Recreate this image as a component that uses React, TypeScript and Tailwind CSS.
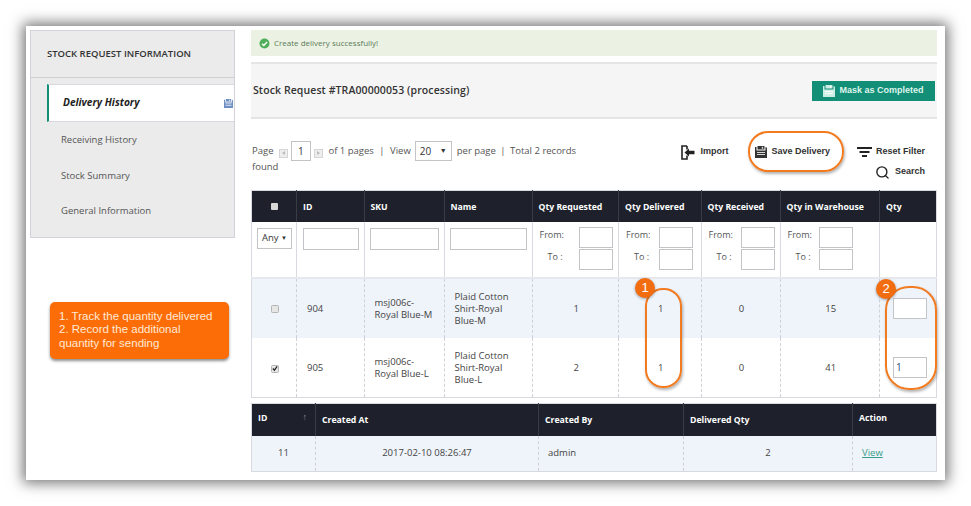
import React from 'react';
import { Search } from 'lucide-react';

const sans = 'font-["Open_Sans","Liberation_Sans",sans-serif]';
const arial = 'font-["Liberation_Sans",Arial,sans-serif]';

const rows = [
  { id: 904, sku: ['msj006c-', 'Royal Blue-M'], name: ['Plaid Cotton', 'Shirt-Royal', 'Blue-M'], requested: 1, delivered: 1, received: 0, warehouse: 15, qty: '', checked: false, bg: 'bg-[#eff3fa]' },
  { id: 905, sku: ['msj006c-', 'Royal Blue-L'], name: ['Plaid Cotton', 'Shirt-Royal', 'Blue-L'], requested: 2, delivered: 1, received: 0, warehouse: 41, qty: '1', checked: true, bg: 'bg-white' },
];

function FloppyIcon({ color, size = 12 }: { color: string; size?: number }) {
  return (
    <svg width={size} height={size} viewBox="0 0 12 12">
      <path d="M0 1h1.5v3.5h9V1H11l1 1v10H0z" fill={color} />
      <rect x="2.5" y="0" width="7" height="3.5" fill={color} />
      <rect x="6.8" y="0.8" width="1.4" height="2" fill="#fff" opacity="0.8" />
      <rect x="2" y="6" width="8" height="1" fill="#fff" opacity="0.8" />
      <rect x="2" y="8" width="8" height="1" fill="#fff" opacity="0.8" />
    </svg>
  );
}

function ImportIcon() {
  return (
    <svg width="14" height="15" viewBox="0 0 14 15" fill="none">
      <path d="M6 1H1v13h5V10.500M6 4.500V1" stroke="#222" strokeWidth="1.600" />
      <path d="M3.500 7.500L8 3.500v2.200h5.500v3.600H8v2.200z" fill="#222" />
    </svg>
  );
}

function FilterIcon() {
  return (
    <svg width="15" height="11" viewBox="0 0 15 11">
      <rect x="0" y="0" width="15" height="2" fill="#222" />
      <rect x="2.500" y="4" width="10" height="2" fill="#222" />
      <rect x="5" y="8" width="5" height="2" fill="#222" />
    </svg>
  );
}

function PagerArrow({ dir }: { dir: 'left' | 'right' }) {
  return (
    <span className="mx-[3px] inline-flex h-[9px] w-[9px] items-center justify-center border border-[#d5d5d5] bg-[#eeeeee] align-[-1px]">
      <span className={`h-0 w-0 border-y-[2px] border-y-transparent ${dir === 'left' ? 'border-r-[3px] border-r-[#bbbbbb]' : 'border-l-[3px] border-l-[#bbbbbb]'}`} />
    </span>
  );
}

function CheckBox({ checked }: { checked: boolean }) {
  return (
    <span className="inline-flex h-[8px] w-[8px] items-center justify-center rounded-[1.500px] border border-[#b5b5b5] bg-[#e6e6e6] align-middle">
      {checked && (
        <svg width="7" height="7" viewBox="0 0 7 7">
          <path d="M1 3.500l1.800 2L6 1" fill="none" stroke="#222" strokeWidth="1.400" />
        </svg>
      )}
    </span>
  );
}

function TextBox({ className = '', value = '' }: { className?: string; value?: string }) {
  return (
    <input
      readOnly
      value={value}
      className={`block border border-[#c4c4c8] bg-white px-[2px] text-[10px] text-[#1d4f7c] outline-none ${className}`}
    />
  );
}

function RangeFilter({ offset }: { offset: string }) {
  return (
    <div className={`flex flex-col gap-[1px] ${offset} text-[9px] text-[#555]`}>
      <div className="flex items-start justify-between">
        <span className="mt-[1px]">From:</span>
        <TextBox className="h-[21px] w-[34px]" />
      </div>
      <div className="flex items-start justify-between">
        <span className="ml-[8px] mt-[1px]">To :</span>
        <TextBox className="h-[21px] w-[34px]" />
      </div>
    </div>
  );
}

function Th({ children, className = '' }: { children?: React.ReactNode; className?: string }) {
  return (
    <th className={`border-r border-[#383c45] px-[6px] align-middle text-[8.700px] font-bold text-white last:border-r-0 ${className}`}>
      {children}
    </th>
  );
}

function Td({ children, className = '' }: { children?: React.ReactNode; className?: string }) {
  return (
    <td className={`border-r border-dashed border-r-[#cfd1d6] align-middle text-[9.500px] text-[#444] last:border-r-0 ${className}`}>
      {children}
    </td>
  );
}

function Oval({ className }: { className: string }) {
  return (
    <div className={`pointer-events-none absolute border-2 border-[#f27a1f] shadow-[1px_2px_3px_rgba(0,0,0,0.3)] ${className}`} />
  );
}

function Badge({ label, className }: { label: string; className: string }) {
  return (
    <div className={`absolute flex h-[20px] w-[20px] items-center justify-center rounded-full bg-[#f26d0f] text-[13px] text-white shadow-[0_1px_3px_rgba(0,0,0,0.35)] ${arial} ${className}`}>
      {label}
    </div>
  );
}

export default function App() {
  return (
    <div className={`h-[506px] w-[971px] overflow-hidden bg-white p-[26px] ${sans}`}>
      <div className="relative flex h-[454px] w-[919px] gap-[16px] bg-white p-[4px] shadow-[0_0_13px_3px_rgba(0,0,0,0.55)]">
        {/* sidebar */}
        <div className="w-[205px] shrink-0">
          <div className="border border-[#d2d3da] bg-[#ebebeb]">
            <div className="flex h-[47px] items-center border-b border-[#cfcfd4] pl-[16px] text-[9.500px] font-semibold text-[#333]">
              STOCK REQUEST INFORMATION
            </div>
            <div className="ml-[16px] pt-[6px] pb-[7.500px]">
              <div className="flex h-[38px] items-center justify-between border-y border-l-2 border-y-[#d8d8de] border-l-[#128f76] bg-white pr-[1px] pl-[14px] text-[10.200px] font-bold text-[#222] italic">
                <span>Delivery History</span>
                <FloppyIcon color="#6f8fc4" size={9} />
              </div>
              <div className="mt-[0.500px] flex h-[35.500px] items-center pl-[14px] text-[9.500px] text-[#555]">Receiving History</div>
              <div className="flex h-[35.500px] items-center pl-[14px] text-[9.500px] text-[#555]">Stock Summary</div>
              <div className="flex h-[35.500px] items-center pl-[14px] text-[9.500px] text-[#555]">General Information</div>
            </div>
          </div>
          <div className={`mt-[64px] ml-[20px] h-[57px] w-[179px] rounded-[5px] bg-[#fd6d07] px-[9px] py-[8px] text-[11.500px] leading-[13.500px] text-[#ffe9d6] shadow-[0_2px_3px_rgba(0,0,0,0.45)] ${arial}`}>
            <div>1. Track the quantity delivered</div>
            <div>2. Record the additional quantity for sending</div>
          </div>
        </div>

        {/* main */}
        <div className="w-[686px] shrink-0">
          <div className="flex h-[26px] items-center gap-[4px] bg-[#ebf2e4] pl-[8px] text-[8px] text-[#5b7a57]">
            <svg width="11" height="11" viewBox="0 0 11 11">
              <circle cx="5.500" cy="5.500" r="5" fill="#4fae5a" />
              <path d="M3 5.700l1.800 1.800L8 4" fill="none" stroke="#fff" strokeWidth="1.400" />
            </svg>
            Create delivery successfully!
          </div>

          <div className="mt-[6px] flex h-[57px] items-center justify-between border-y-2 border-[#e5e5e5] bg-[#f5f5f5] pr-[2px] pl-[2px]">
            <span className="mt-[1px] text-[10.500px] font-semibold tracking-[0.1px] text-[#333]">Stock Request #TRA00000053 (processing)</span>
            <div className={`flex h-[20px] w-[123px] items-center justify-center gap-[4px] bg-[#128f76] text-[9px] font-bold text-[#dff5ee] ${arial}`}>
              <FloppyIcon color="#cdeee4" />
              Mask as Completed
            </div>
          </div>

          <div className="flex h-[71px] items-start justify-between pt-[22px]">
            <div className="mt-[2px] w-[340px] pl-[1px] text-[9.500px] leading-[16px] text-[#555]">
              Page <PagerArrow dir="left" />
              <span className="-my-[2px] inline-block h-[20px] w-[20px] border border-[#c4c4c8] bg-white text-center align-middle text-[10px] leading-[18px] text-[#333]">1</span>
              <PagerArrow dir="right" /> of 1 pages <span className="mx-[3px]">|</span> View
              <span className="-my-[2px] mr-[5px] ml-[4px] inline-flex h-[20px] w-[37px] items-center justify-between border border-[#c4c4c8] bg-white px-[4px] align-middle text-[10px] text-[#333]">
                20<span className="text-[7px]">▼</span>
              </span>
              per page <span className="mx-[2px]">|</span> Total 2 records found
            </div>
            <div className={`mt-[1px] flex flex-col items-end pr-[12px] text-[9px] font-bold text-[#333] ${arial}`}>
              <div className="flex h-[20px] items-center gap-[27px]">
                <span className="flex items-center gap-[5px]"><ImportIcon />Import</span>
                <span className="flex items-center gap-[4px]"><FloppyIcon color="#333" />Save Delivery</span>
                <span className="flex items-center gap-[4px]"><FilterIcon />Reset Filter</span>
              </div>
              <span className="flex h-[20px] items-center gap-[5px]"><Search size={15} strokeWidth={2.200} color="#222" />Search</span>
            </div>
          </div>

          <table className="w-[686px] table-fixed border-collapse border border-[#d8dae0]">
            <colgroup>
              <col className="w-[45px]" /><col className="w-[67.500px]" /><col className="w-[80px]" /><col className="w-[88px]" />
              <col className="w-[86.500px]" /><col className="w-[82.500px]" /><col className="w-[79px]" /><col className="w-[99.500px]" /><col />
            </colgroup>
            <thead>
              <tr className="h-[31px] bg-[#1e212b]">
                <Th className="pt-[2px] text-center"><span className="inline-block h-[7px] w-[7px] rounded-[1px] bg-[#d8d8d8]" /></Th>
                <Th className="pt-[2px] text-left">ID</Th>
                <Th className="pt-[2px] text-left">SKU</Th>
                <Th className="pt-[2px] text-left">Name</Th>
                <Th className="pt-[2px] text-left">Qty Requested</Th>
                <Th className="pt-[2px] text-left">Qty Delivered</Th>
                <Th className="pt-[2px] text-left">Qty Received</Th>
                <Th className="pt-[2px] text-left">Qty in Warehouse</Th>
                <Th className="pt-[2px] text-left">Qty</Th>
              </tr>
            </thead>
            <tbody>
              <tr className="h-[56px] border-b-2 border-[#e6e8ee]">
                <td className="border-r border-[#d8dae0] px-[5px] pt-[6px] align-top">
                  <div className="flex h-[21px] w-[35px] items-center justify-between border border-[#c4c4c8] bg-white px-[4px] text-[9.500px] text-[#333]">
                    Any<span className="text-[6px]">▼</span>
                  </div>
                </td>
                <td className="border-r border-[#d8dae0] pl-[6px] pt-[6px] align-top"><TextBox className="h-[22px] w-[56px]" /></td>
                <td className="border-r border-[#d8dae0] pl-[5px] pt-[6px] align-top"><TextBox className="h-[22px] w-[69px]" /></td>
                <td className="border-r border-[#d8dae0] pl-[5px] pt-[6px] align-top"><TextBox className="h-[22px] w-[77px]" /></td>
                <td className="border-r border-[#d8dae0] pt-[5.500px] align-top"><RangeFilter offset="ml-[7px] mr-[5px]" /></td>
                <td className="border-r border-[#d8dae0] pt-[5.500px] align-top"><RangeFilter offset="ml-[7px] mr-[8px]" /></td>
                <td className="border-r border-[#d8dae0] pt-[5.500px] align-top"><RangeFilter offset="ml-[7px] mr-[5px]" /></td>
                <td className="border-r border-[#d8dae0] pt-[5.500px] align-top"><RangeFilter offset="ml-[7px] mr-[26px]" /></td>
                <td />
              </tr>
              {rows.map((row) => (
                <tr key={row.id} className={`h-[60px] ${row.bg}`}>
                  <Td className="pt-[2px] pl-[2px] text-center"><CheckBox checked={row.checked} /></Td>
                  <Td className="pt-[2px] pl-[10px]">{row.id}</Td>
                  <Td className="pt-[2px] pl-[10px] leading-[12px]">{row.sku.map((s) => <div key={s}>{s}</div>)}</Td>
                  <Td className="pt-[2px] pl-[10px] leading-[12px]">{row.name.map((s) => <div key={s}>{s}</div>)}</Td>
                  <Td className="pt-[2px] pl-[2px] text-center">{row.requested}</Td>
                  <Td className="pt-[2px] pl-[2px] text-center">{row.delivered}</Td>
                  <Td className="pt-[2px] pl-[2px] text-center">{row.received}</Td>
                  <Td className="pt-[2px] pl-[2px] text-center">{row.warehouse}</Td>
                  <Td className="pl-[13px]">
                    <TextBox className="h-[21px] w-[34px]" value={row.qty} />
                  </Td>
                </tr>
              ))}
            </tbody>
          </table>

          <table className="mt-[5px] w-[686px] table-fixed border-collapse border border-[#d8dae0]">
            <colgroup>
              <col className="w-[64px]" /><col className="w-[223px]" /><col className="w-[145px]" /><col className="w-[169px]" /><col />
            </colgroup>
            <thead>
              <tr className="h-[32px] bg-[#1e212b]">
                <Th className="relative pb-[3px] text-left">ID<span className="absolute top-[6px] right-[8px] text-[9px] font-normal text-[#8b8e96]">↑</span></Th>
                <Th className="pt-[2px] text-left">Created At</Th>
                <Th className="pt-[2px] text-left">Created By</Th>
                <Th className="pt-[2px] text-left">Delivered Qty</Th>
                <Th className="pb-[3px] text-left">Action</Th>
              </tr>
            </thead>
            <tbody>
              <tr className="h-[36px] bg-[#eff3fa]">
                <Td className="text-center">11</Td>
                <Td className="text-center">2017-02-10 08:26:47</Td>
                <Td className="pl-[9px]">admin</Td>
                <Td className="text-center">2</Td>
                <Td className="pl-[9px]"><span className="text-[#3a9d8a] underline">View</span></Td>
              </tr>
            </tbody>
          </table>
        </div>

        {/* annotations */}
        <Oval className="top-[105px] left-[722px] h-[41px] w-[96px] rounded-[20px]" />
        <Oval className="top-[262px] left-[619px] h-[100px] w-[37px] rounded-[18px]" />
        <Oval className="top-[260px] left-[859px] h-[104px] w-[52px] rounded-[24px]" />
        <Badge label="1" className="top-[252px] left-[609px]" />
        <Badge label="2" className="top-[253px] left-[850px]" />
      </div>
    </div>
  );
}
